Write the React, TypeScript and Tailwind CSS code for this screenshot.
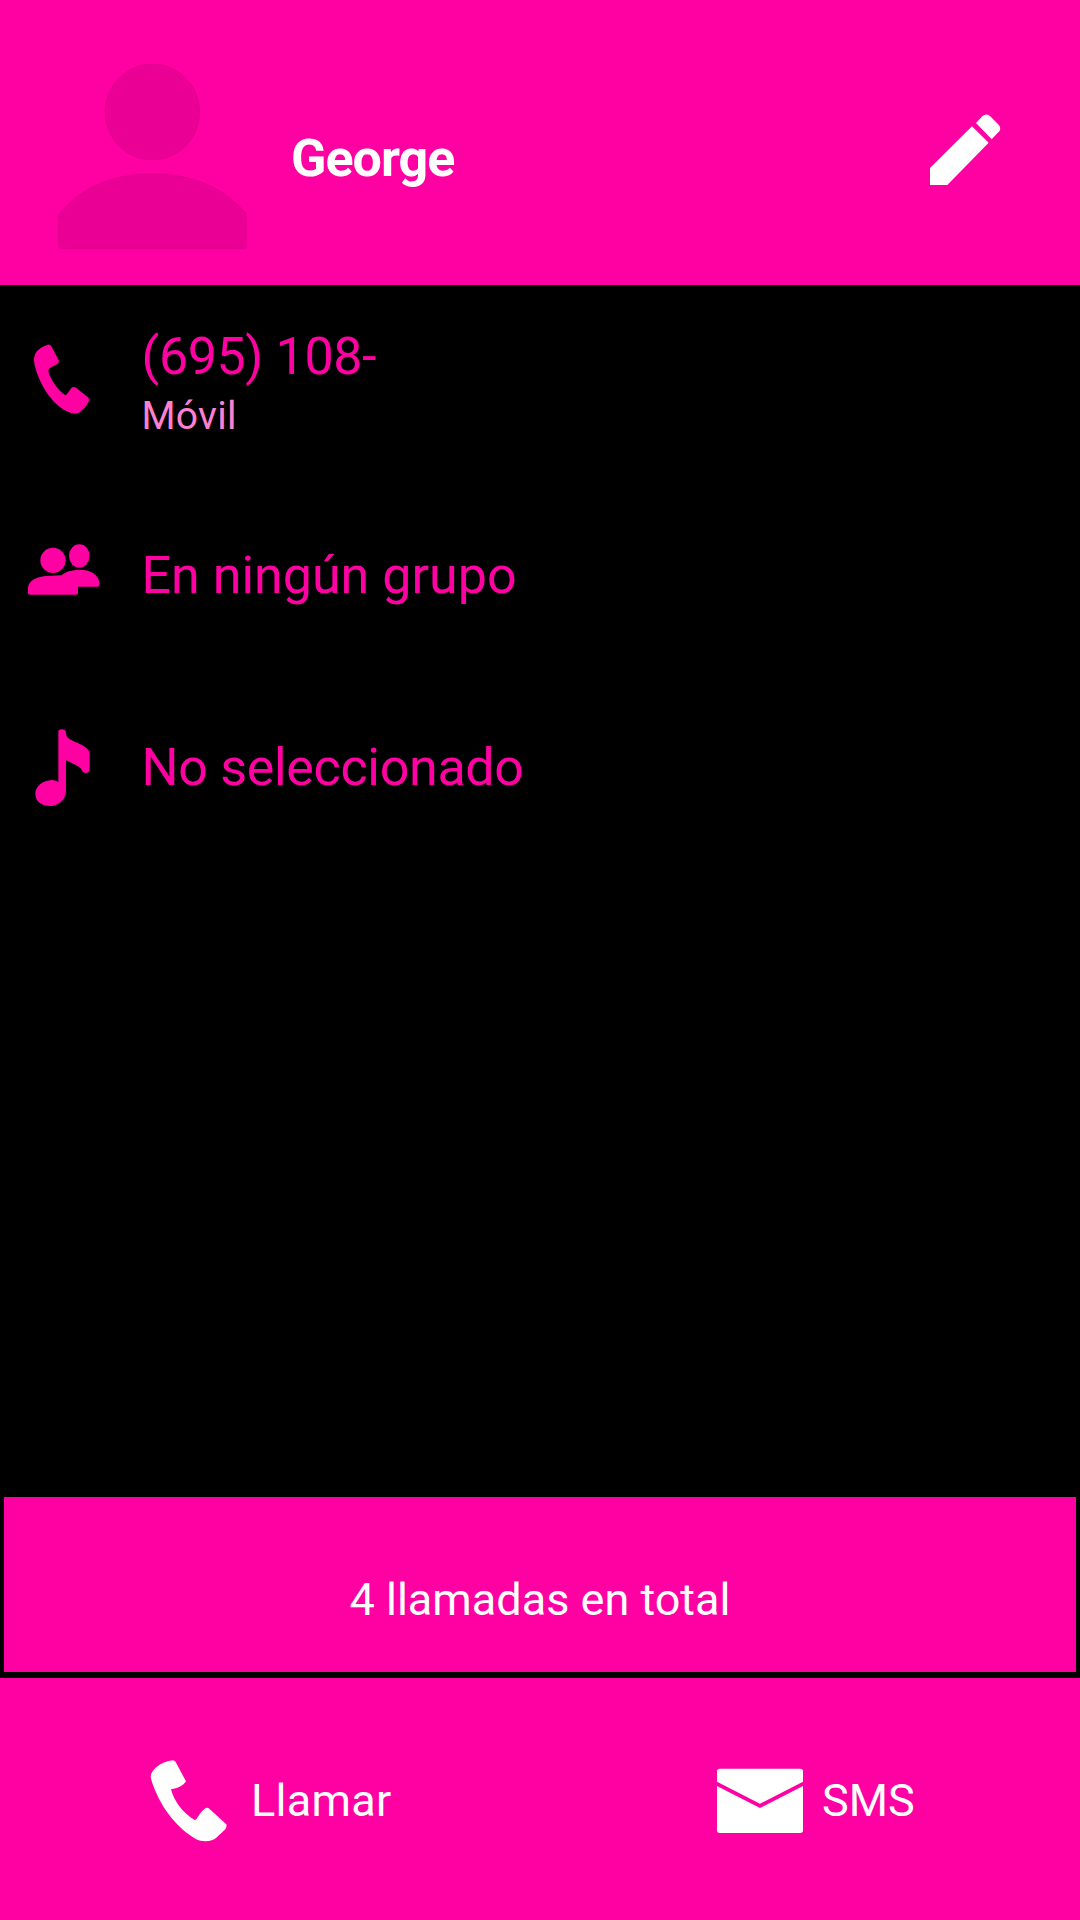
import type { ReactNode } from 'react';

interface DetailRow {
  id: string;
  title: string;
  titleClass: string;
  rowClass: string;
  subtitle?: string;
  icon: ReactNode;
}

const AvatarIcon = () => (
  <svg viewBox="0 0 660 660" className="w-[220px] h-[220px] shrink-0" fill="#ea0094" stroke="#e0008f" strokeWidth="3">
    <ellipse cx="337" cy="216" rx="141.5" ry="143.5" />
    <path d="M56 524 C125 438 225 402 337 402 C449 402 549 438 618 520 V619 Q618 626 610 626 H66 Q56 626 56 616 Z" />
  </svg>
);

const PencilIcon = () => (
  <svg viewBox="0 0 360 360" className="w-[120px] h-[120px] shrink-0" fill="white">
    <path d="M216 109 L266 158 L142 285 H90 V234 Z" />
    <path d="M228 99 L247 79 Q258 69 270 78 L296 104 Q304 113 298 124 L275 148 Z" />
  </svg>
);

const PhoneIcon = () => (
  <svg viewBox="48 45 288 288" className="w-24 h-24" fill="currentColor">
    <path d="M144 74 Q150 73 154 79 L177 122 Q178 127 173 131 L151 143 Q144 147 145 154 C152 180 172 208 194 224 Q199 227 203 220 L214 204 Q221 198 228 203 L264 232 Q270 239 265 247 C258 261 247 272 236 278 Q222 284 207 277 C174 264 141 228 121 184 Q104 145 102 122 Q101 105 112 92 Q126 78 144 74 Z" />
  </svg>
);

const GroupIcon = () => (
  <svg viewBox="18 -8 288 288" className="w-24 h-24" fill="currentColor">
    <ellipse cx="129" cy="89" rx="38" ry="38" />
    <ellipse cx="208" cy="76" rx="31" ry="35" />
    <path d="M60 192 Q54 192 54 186 V172 C55 150 80 136 120 135 L155 134 C163 124 185 117 211 117 C244 117 266 134 269 157 Q270 168 262 168 H204 V186 Q204 192 198 192 Z" />
  </svg>
);

const MusicIcon = () => (
  <svg viewBox="18 570 288 288" className="w-24 h-24" fill="currentColor">
    <path d="M145 603 Q146 598 156 598 Q166 598 167 603 Q168 618 174 624 C192 637 216 641 230 655 Q239 662 239 671 V718 Q239 729 227 729 Q218 729 212 715 Q205 707 168 691 V783 C168 808 147 828 121 828 C94 828 76 813 76 791 C76 769 98 751 125 750 Q138 750 145 756 Z" />
  </svg>
);

const CallIcon = () => (
  <svg viewBox="0 0 330 330" className="w-[110px] h-[110px] shrink-0" fill="white">
    <path d="M128 61 Q134 61 137 66 L168 124 C160 137 143 145 123 148 C131 182 160 221 194 240 C202 239 209 216 224 206 Q231 201 238 206 L289 253 Q291 261 286 268 L258 294 C248 304 219 308 197 297 C158 275 116 232 91 184 C76 154 63 124 62 108 C66 87 93 65 128 61 Z" />
  </svg>
);

const MailIcon = () => (
  <svg viewBox="0 0 330 330" className="w-[110px] h-[110px] shrink-0" fill="white">
    <path d="M59 86 H301 Q309 86 309 94 V125 L180 191 L51 125 V94 Q51 86 59 86 Z" />
    <path d="M51 138 L180 204 L309 138 V271 Q309 279 301 279 H59 Q51 279 51 271 Z" />
  </svg>
);

const rows: DetailRow[] = [
  {
    id: 'phone',
    title: '(695) 108-',
    titleClass: 'tracking-[-0.4px]',
    rowClass: 'h-[196px]',
    subtitle: 'Móvil',
    icon: <PhoneIcon />,
  },
  {
    id: 'group',
    title: 'En ningún grupo',
    titleClass: 'tracking-normal',
    rowClass: 'h-[189px]',
    icon: <GroupIcon />,
  },
  {
    id: 'ringtone',
    title: 'No seleccionado',
    titleClass: 'tracking-[-0.32px]',
    rowClass: 'h-[196px]',
    icon: <MusicIcon />,
  },
];

export default function App() {
  return (
    <div className="flex flex-col w-[1080px] h-[1920px] bg-black font-[Roboto,sans-serif] overflow-hidden">
      {/* Header */}
      <header className="flex h-[285px] shrink-0 bg-[#ff00a2] text-white pl-10 pt-10">
        <AvatarIcon />
        <h1 className="w-[640px] pl-[31px] pt-[89px] text-[52px] leading-[60px] font-bold tracking-[-1px]">George</h1>
        <button className="self-start mt-[50px]" aria-label="Editar">
          <PencilIcon />
        </button>
      </header>

      {/* Contact details */}
      <main className="flex-1 text-[#ff00a2]">
        {rows.map((row) => (
          <div key={row.id} className={`flex items-center pl-4 ${row.rowClass}`}>
            {row.icon}
            <div className="pl-[29.5px]">
              <p className={`text-[52px] leading-[60px] whitespace-nowrap ${row.titleClass}`}>{row.title}</p>
              {row.subtitle && (
                <p className="mt-[5px] text-[39px] leading-[48px] tracking-[0.3px] text-[#ff80d0]">{row.subtitle}</p>
              )}
            </div>
          </div>
        ))}
      </main>

      {/* Call log summary */}
      <button className="h-[175px] mx-1 mb-1.5 shrink-0 bg-[#ff00a2] text-white text-[45px] leading-[52px] pt-[30px]">
        4 llamadas en total
      </button>

      {/* Actions */}
      <footer className="flex h-[242px] shrink-0 bg-[#ff00a2] text-white text-[45px] leading-[52px] pt-[62px]">
        <button className="flex items-start w-[540px] pl-[130px]">
          <CallIcon />
          <span className="pt-[35px] pl-[11px] tracking-[0.3px]">Llamar</span>
        </button>
        <button className="flex items-start w-[540px] pl-[160px]">
          <MailIcon />
          <span className="pt-[35px] pl-[12px]">SMS</span>
        </button>
      </footer>
    </div>
  );
}
